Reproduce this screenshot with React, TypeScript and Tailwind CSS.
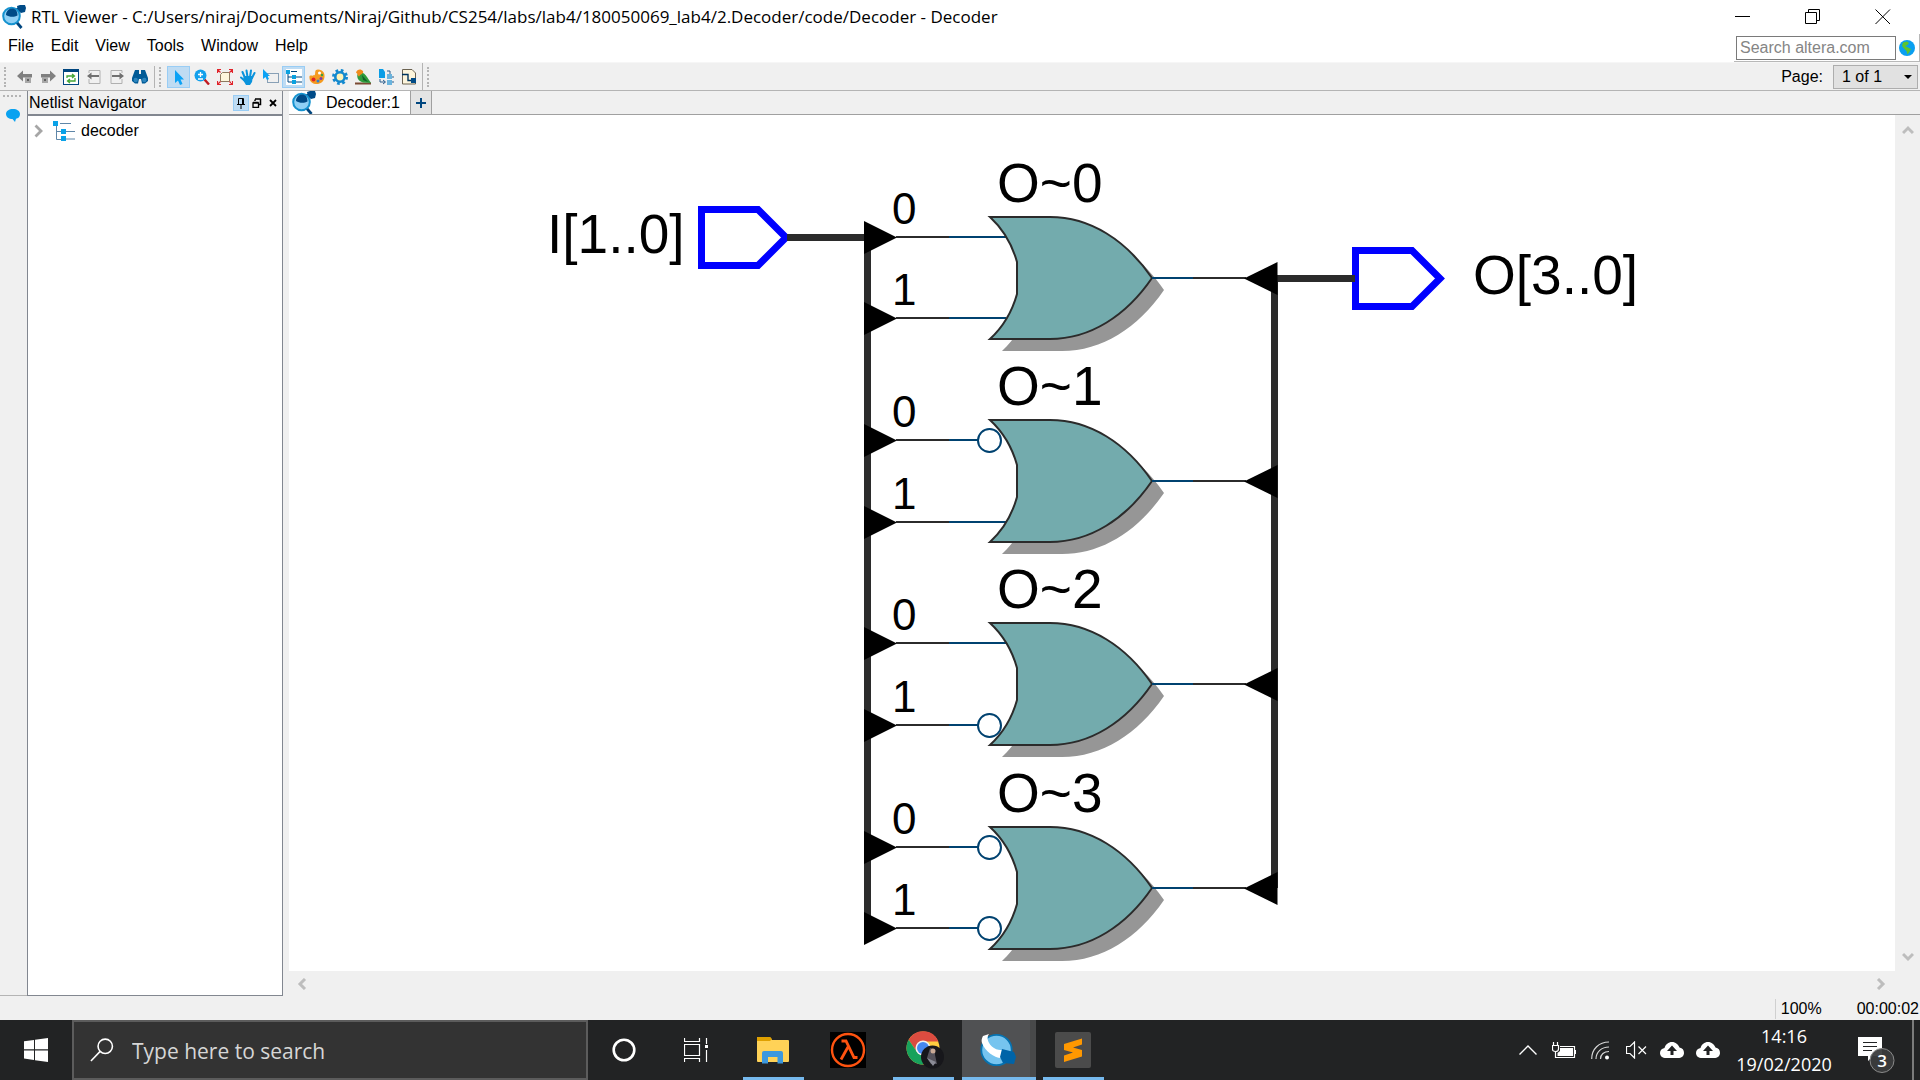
import type { ReactNode } from "react";

const UI = "font-['Liberation_Sans',Arial,sans-serif]";
const SEGOE = "font-['Open_Sans','Noto_Sans',sans-serif]";

function Icon({ children, className = "size-4" }: { children: ReactNode; className?: string }) {
  return (
    <svg viewBox="0 0 16 16" className={`shrink-0 ${className}`} fill="none" aria-hidden="true">
      {children}
    </svg>
  );
}

function AppLogo() {
  return (
    <svg viewBox="0 0 24 24" className="size-6 shrink-0" fill="none" aria-hidden="true">
      <path d="M15 1 L18 0 H23 L24 3 L23 7 L19 8 L16 6 Z" fill="#004b87" />
      <path d="M12 5 L19 3" stroke="#004b87" strokeWidth="2" />
      <path d="M14 16.500 L19.500 23" stroke="#00467f" strokeWidth="2.800" />
      <circle cx="9.500" cy="11" r="8.300" fill="#8fd0f5" stroke="#1592cf" strokeWidth="2" />
      <path d="M4 10 C4 6 7 3.500 10 3.500 C13.500 3.500 15.500 6 15.500 10.500 C12 12.500 7 12 4 10 Z" fill="#004b87" />
    </svg>
  );
}

const historyTools = [
  {
    name: "Back",
    icon: (
      <>
        <path d="M0 7 L6 1.500 V5 H15 V8.500 H6 V12.500 Z" fill="#808080" />
        <rect x="8" y="8" width="6" height="6" fill="#a8a8a8" />
        <rect x="10" y="10" width="2" height="2" fill="#606060" />
      </>
    ),
  },
  {
    name: "Forward",
    icon: (
      <>
        <path d="M16 7 L10 1.500 V5 H1 V8.500 H10 V12.500 Z" fill="#808080" />
        <rect x="2" y="8" width="6" height="6" fill="#a8a8a8" />
        <rect x="4" y="10" width="2" height="2" fill="#606060" />
      </>
    ),
  },
  {
    name: "Refresh",
    icon: (
      <>
        <rect x="0.500" y="0.500" width="15" height="15" fill="#fff" stroke="#00467f" />
        <rect width="16" height="3" fill="#00467f" />
        <path d="M4 9 V7 H11 M9 5 L11.500 7 L9 9 M12 9 V12 H5 M7 10 L4.500 12 L7 14" stroke="#43a535" strokeWidth="1.300" />
      </>
    ),
  },
  {
    name: "Previous page",
    icon: (
      <>
        <path d="M3 4 V1.500 H14 V14.500 H3 V10" stroke="#b0b0b0" />
        <path d="M1 7 L5.500 3.500 V6 H13 V8 H5.500 V10.500 Z" fill="#707070" />
      </>
    ),
  },
  {
    name: "Next page",
    icon: (
      <>
        <path d="M13 4 V1.500 H2 V14.500 H13 V10" stroke="#b0b0b0" />
        <path d="M15 7 L10.500 3.500 V6 H3 V8 H10.500 V10.500 Z" fill="#707070" />
      </>
    ),
  },
  {
    name: "Find",
    icon: (
      <>
        <path d="M3 1 H7 V5 H9 V1 H13 L16 9 V12 L13 14.500 H10 L9 10 H7 L6 14.500 H3 L0 12 V9 Z" fill="#005a96" />
        <circle cx="3.700" cy="11" r="2.200" fill="#2b85be" />
        <circle cx="12.300" cy="11" r="2.200" fill="#2b85be" />
      </>
    ),
  },
];

const viewTools = [
  {
    name: "Select",
    active: true,
    icon: <path d="M4 1 V14 L7 11.500 L9 16 L11.500 15 L9.500 10.500 H13 Z" fill="#0aa2f5" />,
  },
  {
    name: "Zoom",
    icon: (
      <>
        <path d="M10.500 10.500 L15 15.500" stroke="#c11a20" strokeWidth="2.400" />
        <circle cx="6.500" cy="6.500" r="6" fill="#12a0ec" />
        <path d="M4 5.500 H9 M6.500 3 V8 M4 10 H9" stroke="#fff" strokeWidth="1.300" />
      </>
    ),
  },
  {
    name: "Fit in window",
    icon: (
      <>
        <path d="M5.500 3.500 H12.500 V12.500 H3.500 V5.500 Z" fill="#fdf5dc" stroke="#8c7a60" />
        <path d="M0.500 4 V0.500 H4 M12 0.500 H15.500 V4 M15.500 12 V15.500 H12 M4 15.500 H0.500 V12 M0.500 0.500 L3.500 3.500 M15.500 0.500 L12.500 3.500 M15.500 15.500 L12.500 12.500 M0.500 15.500 L3.500 12.500" stroke="#e0242b" strokeWidth="1.200" />
      </>
    ),
  },
  {
    name: "Hand",
    icon: (
      <>
        <path d="M5 9 L2.500 3 M7.500 8 L6.500 1.500 M10 8 L11 1.500 M12 9 L14.500 4 M5 12 L1 8.500" stroke="#0a93dc" strokeWidth="2" strokeLinecap="round" />
        <path d="M4 7 H13 L12 13 L10 16 H6 L3 11 Z" fill="#0a93dc" />
      </>
    ),
  },
  {
    name: "Area selection",
    icon: (
      <>
        <rect x="4.500" y="4.500" width="11" height="9" stroke="#20507c" strokeDasharray="1 1" />
        <path d="M0 0 V10 L2.500 8 L4 11 L6 10 L4.500 7 H7 Z" fill="#0aa2f5" />
      </>
    ),
  },
  {
    name: "Netlist navigator",
    active: true,
    icon: (
      <>
        <rect width="16" height="16" fill="#fff" />
        <path d="M2 3 V13 H7 M2 8 H7 M5 2.500 H11 M9 8 H16 M9 13 H16" stroke="#00467f" />
        <path d="M0 1 H4 V5 H0 Z M6 6 H10 V10 H6 Z M6 11 H10 V15 H6 Z" fill="#0aa2e0" />
      </>
    ),
  },
  {
    name: "Color settings",
    icon: (
      <>
        <path d="M9 0.500 C14 0.500 16 4.500 15.500 8 C15 13 11 15.500 6.500 15 C2 14.500 0 11 0.500 7 C2 6 5 7.500 6 5.500 C6.500 3.500 5.500 0.500 9 0.500 Z" fill="#f59b20" />
        <circle cx="10.500" cy="4" r="1.500" fill="#fff" />
        <circle cx="4.500" cy="10.500" r="2" fill="#e02424" />
        <circle cx="9" cy="12" r="1.500" fill="#2c7fd0" />
        <circle cx="12" cy="9.500" r="1.500" fill="#7a3ea8" />
        <circle cx="13" cy="6" r="1.200" fill="#37a043" />
      </>
    ),
  },
  {
    name: "Settings",
    icon: (
      <>
        <circle cx="8" cy="8" r="6.500" stroke="#1389cf" strokeWidth="3" strokeDasharray="2.600 2.500" />
        <circle cx="8" cy="8" r="4.700" fill="#fff3b8" stroke="#1389cf" strokeWidth="2.600" />
      </>
    ),
  },
  {
    name: "Bird's eye view",
    icon: (
      <>
        <path d="M0 13.500 H16 V15.500 H0 Z" fill="#7a4a33" />
        <path d="M3 4 C7 2 10 5 12 8 L16 14 L8 13.500 C3 12 1 8 3 4 Z" fill="#2e9b3c" />
        <path d="M1 3.500 C2 0 6 -0.500 8 2 C9 5 5 5 4.500 7 C4 8 3 7 2.500 5 Z" fill="#f08a1c" />
        <path d="M7 6 L13 13 L8 11 Z" fill="#12602a" />
      </>
    ),
  },
  {
    name: "Bring to page",
    icon: (
      <>
        <path d="M1 0 H5 L7 3 V9 H1 Z" fill="#0a9de6" />
        <path d="M9 5 H14 V10 H9 Z M9 11 H14 V16 H9 Z" fill="#6ab4de" />
        <path d="M9 2 H12 V5 M2 10 V13 H7 M5 11 L7.500 13 L5 15 M15 7 V9 M15 12 V14" stroke="#2a5c8c" />
      </>
    ),
  },
  {
    name: "Export diagram",
    icon: (
      <>
        <path d="M1.500 0.500 H11 L14.500 4 V15 H1.500 Z" fill="#fdf5dc" stroke="#6b6250" />
        <path d="M1 5.500 H7 V11.500 H11" stroke="#00345e" strokeWidth="1.400" />
        <rect x="10" y="9" width="5" height="5" fill="#004b87" />
      </>
    ),
  },
];

function Grip() {
  return <div className="h-5 w-1 border-l-2 border-dotted border-[#b4b4b4]" />;
}

function ToolButton({ name, icon, active }: { name: string; icon: ReactNode; active?: boolean }) {
  return (
    <button
      aria-label={name}
      className={`flex h-[22px] w-[23px] items-center justify-center border ${active ? "border-[#99cdf5] bg-[#bfdcf3]" : "border-transparent"}`}
    >
      <Icon>{icon}</Icon>
    </button>
  );
}

function TitleBar() {
  return (
    <header className={`flex h-[34px] items-center bg-white pl-0.5 text-black ${SEGOE}`}>
      <AppLogo />
      <h1 className="ml-[5px] flex-1 truncate text-[17px] leading-6">
        RTL Viewer - C:/Users/niraj/Documents/Niraj/Github/CS254/labs/lab4/180050069_lab4/2.Decoder/code/Decoder - Decoder
      </h1>
      <div className="mr-0.5 flex h-full">
        <button aria-label="Minimize" className="flex w-[70px] items-center justify-center">
          <Icon><path d="M0 7.500 H15" stroke="#000" /></Icon>
        </button>
        <button aria-label="Restore" className="flex w-[70px] items-center justify-center">
          <Icon><path d="M0.500 3.500 H11.500 V14.500 H0.500 Z M3.500 3.500 V0.500 H14.500 V11.500 H11.500" stroke="#000" /></Icon>
        </button>
        <button aria-label="Close" className="flex w-[70px] items-center justify-center">
          <Icon><path d="M0.500 0.500 L15 15 M15 0.500 L0.500 15" stroke="#000" /></Icon>
        </button>
      </div>
    </header>
  );
}

function MenuBar() {
  return (
    <div className="flex h-7 items-start justify-between bg-white">
      <nav className="flex gap-[17px] pl-2">
        {["File", "Edit", "View", "Tools", "Window", "Help"].map((item) => (
          <button key={item} className="text-base leading-6">{item}</button>
        ))}
      </nav>
      <div className="flex h-7 items-center gap-[3px] border-r border-b border-[#b8b8b8] pr-1 pl-0.5">
        <input
          aria-label="Search altera.com"
          placeholder="Search altera.com"
          className="h-6 w-40 border border-[#7a7a7a] bg-white px-[3px] text-base leading-5 placeholder:text-[#858585]"
        />
        <button aria-label="Search the web">
          <Icon>
            <circle cx="8" cy="8" r="8" fill="#0a9ff0" />
            <path d="M4 2.500 L8 1.500 L10 3 L8.500 5 L6 6 L9 7.500 L12 9 L10.500 12 L8.500 14.500 L7.500 11 L5 8.500 L3 6 Z" fill="#5fc42c" />
          </Icon>
        </button>
      </div>
    </div>
  );
}

function Toolbar() {
  return (
    <div className="flex h-[29px] items-center border-t border-b border-t-[#f6f6f6] border-b-[#b4b4b4] bg-[#f0f0f0]">
      <div className="flex items-center pl-1">
        <Grip />
        <div className="flex pl-[5px]">{historyTools.map((t) => <ToolButton key={t.name} {...t} />)}</div>
      </div>
      <div className="ml-[3px] flex items-center gap-1 border-l border-[#b4b4b4] pl-1">
        <Grip />
        <div className="flex">{viewTools.map((t) => <ToolButton key={t.name} {...t} />)}</div>
      </div>
      <div className="ml-0.5 flex h-full items-center border-l border-[#b4b4b4] pl-1"><Grip /></div>
      <div className="ml-auto flex items-center gap-2.5 pr-0.5">
        <label htmlFor="page" className="text-base">Page:</label>
        <div className="relative">
          <select id="page" className="block h-6 w-[85px] appearance-none border border-[#adadad] bg-[#e1e1e1] pl-2 text-base leading-5">
            <option>1 of 1</option>
          </select>
          <svg viewBox="0 0 8 4" className="pointer-events-none absolute top-2.5 right-1.5 h-1 w-2"><path d="M0 0 H8 L4 4 Z" fill="#000" /></svg>
        </div>
      </div>
    </div>
  );
}

function NetlistNavigator() {
  return (
    <aside className="flex w-[256px] shrink-0 flex-col border border-t-0 border-[#828790] bg-white">
      <div className="flex h-[25px] items-center border-b-2 border-[#828790] bg-[#f0f0f0] pr-px pl-px">
        <h2 className="flex-1 text-base leading-6">Netlist Navigator</h2>
        <button aria-label="Pin" className="flex size-4 items-center justify-center border border-[#99cdf5] bg-[#bfdcf3]">
          <svg viewBox="0 0 10 12" className="h-3 w-2.5" fill="none"><path d="M2.500 1.500 H7.500 V7 M2.500 1.500 V7 M1 7.500 H9 M6.500 2 V7 M5 8 V12" stroke="#000" /></svg>
        </button>
        <button aria-label="Float" className="flex size-4 items-center justify-center">
          <svg viewBox="0 0 10 10" className="size-2.5" fill="none"><path d="M3 1 H9 M3 1.500 V3 M8.500 1 V6.500 H7" stroke="#000" strokeWidth="1.500" /><path d="M1 5 H6.500 V9.500 H1 Z M1 4.500 H6.500" stroke="#000" strokeWidth="1.300" /></svg>
        </button>
        <button aria-label="Close panel" className="flex size-4 items-center justify-center">
          <svg viewBox="0 0 8 8" className="size-2"><path d="M1 1 L7 7 M7 1 L1 7" stroke="#000" strokeWidth="1.800" /></svg>
        </button>
      </div>
      <div className="flex h-[30px] items-center pl-1">
        <button aria-label="Expand decoder" className="flex w-3 justify-center">
          <svg viewBox="0 0 9 14" className="h-3.5 w-[9px]" fill="none"><path d="M1.500 1.500 L7 7 L1.500 12.500" stroke="#a6a6a6" strokeWidth="2.800" /></svg>
        </button>
        <svg viewBox="0 0 22 20" className="ml-[9px] h-5 w-[22px]" fill="none">
          <path d="M3.500 4 V18.500 H9 M3.500 10.500 H9 M7 2.500 H18 M13 10.500 H22 M13 18 H22" stroke="#5f86a8" />
          <path d="M0 0 H5 V5 H0 Z M8 8 H13 V13 H8 Z M8 15 H13 V20 H8 Z" fill="#0aa2e8" />
        </svg>
        <span className="ml-1.5 text-base leading-6">decoder</span>
      </div>
    </aside>
  );
}

const gates = [
  { name: "O~0", y: 237, pinGap: 81, inverted: [false, false] },
  { name: "O~1", y: 440, pinGap: 82, inverted: [true, false] },
  { name: "O~2", y: 643, pinGap: 82, inverted: [false, true] },
  { name: "O~3", y: 847, pinGap: 81, inverted: [true, true] },
];

const GATE = "M990 -20 H1050 C1090 -20 1126 3 1152 41 C1126 79 1090 102 1050 102 H990 C1003 90 1012 75 1017 57 V25 C1012 7 1003 -8 990 -20 Z";

function Gate({ name, y, pinGap, inverted }: { name: string; y: number; pinGap: number; inverted: boolean[] }) {
  return (
    <g transform={`translate(0 ${y})`}>
      {inverted.map((inv, i) => (
        <g key={i} transform={`translate(0 ${i * pinGap})`}>
          <path d="M864 -16 L897 0.500 L864 17 Z" fill="#000" />
          <path d="M896 0 H949" stroke="#2b2b2b" strokeWidth="2" />
          <path d={inv ? "M949 0 H978" : "M949 0 H1006"} stroke="#004270" strokeWidth="2" />
          <text x="892" y="-13" fontSize="44">{i}</text>
        </g>
      ))}
      <path d={GATE} fill="#969696" transform="translate(12 12)" />
      <path d={GATE} fill="#73abad" stroke="#2b2b2b" strokeWidth="2" />
      {inverted.map((inv, i) => inv && <circle key={i} cx="989.500" cy={i * pinGap + 0.5} r="11.500" fill="#fff" stroke="#004270" strokeWidth="2" />)}
      <path d="M1152 41 H1193" stroke="#004270" strokeWidth="2" />
      <path d="M1193 41 H1246" stroke="#2b2b2b" strokeWidth="2" />
      <path d="M1277.500 25 V58 L1244 41.500 Z" fill="#000" />
      <text x="997" y="-35" fontSize="55">{name}</text>
    </g>
  );
}

function Schematic() {
  return (
    <svg
      viewBox="289 115 1606 856"
      preserveAspectRatio="xMinYMin meet"
      className="min-h-0 min-w-0 flex-1 bg-white"
      fill="none"
      role="img"
      aria-label="Decoder schematic"
    >
      <g fill="#000" fontFamily="'Liberation Sans', Arial, sans-serif">
        <path d="M867.500 237 V928 M787 237.500 H866" stroke="#2b2b2b" strokeWidth="7" fill="none" />
        <path d="M1274.500 278 V888 M1276 278.500 H1355" stroke="#2b2b2b" strokeWidth="7" fill="none" />
        <path d="M701.500 209.500 H758 L786 237.500 L758 265.500 H701.500 Z" stroke="#00f" strokeWidth="7" fill="none" />
        <path d="M1355.500 250.500 H1412 L1440 278.500 L1412 306.500 H1355.500 Z" stroke="#00f" strokeWidth="7" fill="none" />
        <path d="M787 237.500 H800 M1345 278.500 H1355" stroke="#2b2b2b" strokeWidth="7" />
        <text x="547" y="253" fontSize="55">I[1..0]</text>
        <text x="1473" y="294" fontSize="55">O[3..0]</text>
        {gates.map((g) => <Gate key={g.name} {...g} />)}
      </g>
    </svg>
  );
}

function ScrollChevron({ label, d }: { label: string; d: string }) {
  return (
    <button aria-label={label} className="flex size-[25px] items-center justify-center">
      <svg viewBox="0 0 12 12" className="size-3" fill="none"><path d={d} stroke="#bdbdbd" strokeWidth="3" /></svg>
    </button>
  );
}

function Workspace() {
  return (
    <main className="ml-1.5 flex min-w-0 flex-1 flex-col">
      <div className="flex h-6 shrink-0 border-b border-[#a0a0a0]">
        <button className="flex w-[121px] items-center overflow-hidden bg-white pl-[3px] text-base leading-6">
          <AppLogo />
          <span className="ml-2.5">Decoder:1</span>
        </button>
        <button aria-label="New tab" className="flex w-[22px] items-center justify-center border-x border-[#a0a0a0] bg-[#e4e4e4]">
          <svg viewBox="0 0 10 10" className="size-2.5"><path d="M5 0 V10 M0 5 H10" stroke="#00467f" strokeWidth="2" /></svg>
        </button>
      </div>
      <div className="flex min-h-0 flex-1">
        <Schematic />
        <div className="flex w-[25px] flex-col justify-between py-0.5">
          <ScrollChevron label="Scroll up" d="M1 9 L6 4 L11 9" />
          <ScrollChevron label="Scroll down" d="M1 3 L6 8 L11 3" />
        </div>
      </div>
      <div className="mr-[27px] flex h-[25px] items-center justify-between">
        <ScrollChevron label="Scroll left" d="M9 1 L4 6 L9 11" />
        <ScrollChevron label="Scroll right" d="M3 1 L8 6 L3 11" />
      </div>
    </main>
  );
}

const UploadCloud = () => (
  <svg viewBox="0 0 24 16" className="h-4 w-6" fill="none" aria-hidden="true">
    <path d="M6 16 C2.500 16 0 14 0 11 C0 8.500 1.500 6.500 4.500 6 C5.500 2.500 8.500 0 12 0 C15.500 0 18.500 2.500 19.500 5.500 C22.500 6 24 8 24 11 C24 14 21.500 16 18 16 Z" fill="#fff" />
    <path d="M12 3.500 L17 9 H13.500 V13 H10.500 V9 H7 Z" fill="#222324" />
  </svg>
);

const apps = [
  {
    name: "File Explorer",
    running: true,
    icon: (
      <svg viewBox="0 0 32 28" className="h-7 w-8">
        <path d="M0 2 Q0 1 1 1 H13 L15 4 H31 Q32 4 32 5 V25 Q32 26 31 26 H1 Q0 26 0 25 Z" fill="#ffd257" />
        <path d="M0 2 Q0 1 1 1 H13 L15 3 L13 5 H0 Z" fill="#dfa000" />
        <path d="M5 27.500 V17 Q5 15 7 15 H24 Q26 15 26 17 V27.500 H20.500 V21 H11 V27.500 Z" fill="#3c98de" />
      </svg>
    ),
  },
  {
    name: "Half-Life",
    icon: (
      <svg viewBox="0 0 36 36" className="size-9" fill="none">
        <rect width="36" height="36" fill="#000" />
        <circle cx="18" cy="18" r="16" stroke="#ff5310" strokeWidth="2.400" />
        <path d="M11.500 9 H16 L24 25.500 H27.500 M18 15 L11 27.500" stroke="#ff5310" strokeWidth="2.800" />
      </svg>
    ),
  },
  {
    name: "Google Chrome",
    running: true,
    icon: (
      <svg viewBox="0 0 38 38" className="ml-1 size-[38px]">
        <circle cx="17" cy="17" r="16.500" fill="#ffcd40" />
        <path d="M2.700 8.800 A16.500 16.500 0 0 1 32.500 10.500 L17 10.500 L11 21 Z" fill="#dc4c40" />
        <path d="M2.700 8.800 A16.500 16.500 0 0 0 17 33.500 L22 23 L11 21 Z" fill="#17a25c" />
        <circle cx="17" cy="17" r="7.500" fill="#f2f2f2" />
        <circle cx="17" cy="17" r="6" fill="#4688f1" />
        <circle cx="26.500" cy="26" r="11.500" fill="#17171b" />
        <path d="M24 17 Q30 17 29 24 L31 33 H25 L21 27 Z" fill="#55525b" />
        <circle cx="27" cy="20" r="2.500" fill="#c9a995" />
        <path d="M21 27 L30 31 L27 35 Z" fill="#8b8c96" />
      </svg>
    ),
  },
  {
    name: "Quartus",
    running: true,
    active: true,
    icon: (
      <svg viewBox="0 0 36 34" className="h-[34px] w-9">
        <circle cx="16.500" cy="17" r="15.200" fill="#76c4ef" stroke="#0672b0" strokeWidth="1.800" />
        <path d="M3 3 L9 1 C6 5 8 11 14 15 C17 17 20 17 22 17 L21 25 C14 25 5 18 2 10 C1 7 2 5 3 3 Z" fill="#fff" />
        <path d="M22 16 L34 19 L36 24 L34 31 L23 30 L20 24 Z" fill="#0064a8" />
      </svg>
    ),
  },
  {
    name: "Sublime Text",
    running: true,
    icon: (
      <svg viewBox="0 0 36 36" className="size-9">
        <rect width="36" height="36" rx="2" fill="#4b4b4b" />
        <path d="M9 12 L27 6.500 V12.500 L18 15.500 L27 18 V24.500 L9 30 V23.500 L18 20.500 L9 18 Z" fill="#ff9800" />
      </svg>
    ),
  },
];

function Taskbar() {
  return (
    <footer className={`flex h-[60px] shrink-0 bg-[#222324] text-white ${SEGOE}`}>
      <button aria-label="Start" className="flex w-[72px] items-center justify-center">
        <svg viewBox="0 0 24 24" className="size-6"><path d="M0 3.300 L10 2 V11.300 H0 Z M11 1.800 L24 0 V11.300 H11 Z M0 12.500 H10 V22 L0 20.600 Z M11 12.500 H24 V24 L11 22.200 Z" fill="#fff" /></svg>
      </button>
      <label className="flex w-[516px] items-center border-2 border-[#5c5c5c] bg-[#333]">
        <svg viewBox="0 0 26 26" className="ml-4 size-6" fill="none"><circle cx="16.500" cy="9" r="7.800" stroke="#fff" strokeWidth="1.700" /><path d="M11 14.500 L1 25" stroke="#fff" strokeWidth="1.700" /></svg>
        <input aria-label="Type here to search" placeholder="Type here to search" className="ml-[18px] min-w-0 flex-1 bg-transparent pt-1 text-[21px] placeholder:text-[#d6d6d6]" />
      </label>
      <button aria-label="Cortana" className="flex w-[72px] items-center justify-center">
        <svg viewBox="0 0 24 24" className="size-6" fill="none"><circle cx="12" cy="12" r="10.300" stroke="#fff" strokeWidth="2.600" /></svg>
      </button>
      <button aria-label="Task view" className="flex w-[72px] items-center justify-center">
        <svg viewBox="0 0 24 24" className="size-6" fill="none"><path d="M0.500 0 V3.500 H15.500 V0 M0.500 6.500 H15.500 V17.500 H0.500 Z M0.500 24 V20.500 H15.500 V24 M22.500 0 V6 M22.500 12 V24" stroke="#fff" strokeWidth="1.200" /><rect x="21" y="7" width="3" height="3" fill="#fff" /></svg>
      </button>
      <div className="ml-1 flex">
        {apps.map((app) => (
          <button key={app.name} aria-label={app.name} className={`flex w-[75px] flex-col items-center ${app.active ? "border-l border-[#222324] bg-[#505153]" : ""}`}>
            <span className={`flex h-[57px] w-full items-center justify-center pt-[3px] ${app.active ? "border-r-[6px] border-[#48494a] pl-1" : "pr-0.5"}`}>{app.icon}</span>
            {app.running && <span className={`h-[3px] bg-[#76b9ed] ${app.active ? "w-full" : "w-[61px]"}`} />}
          </button>
        ))}
      </div>
      <div className="ml-auto flex items-center">
        <button aria-label="Show hidden icons" className="flex w-9 justify-center">
          <svg viewBox="0 0 18 10" className="h-2.5 w-[18px]" fill="none"><path d="M0.500 9.500 L9 1 L17.500 9.500" stroke="#fff" strokeWidth="1.400" /></svg>
        </button>
        <button aria-label="Battery" className="flex w-9 justify-center">
          <svg viewBox="0 0 24 17" className="h-[17px] w-6" fill="none"><path d="M1.500 0 V3 M5.500 0 V3 M0.500 3.500 H6.500 V7 Q6.500 9.500 3.500 9.500 Q0.500 9.500 0.500 7 Z M3.500 9.500 V15.500 H22.500 V4.500 H8 M23.500 8 V12" stroke="#fff" strokeWidth="1.200" /><path d="M8 6 H21 V14 H5.500 V11 L8 9 Z" fill="#fff" /></svg>
        </button>
        <button aria-label="Wi-Fi" className="flex w-9 justify-center">
          <svg viewBox="0 0 18 19" className="h-[19px] w-[18px]" fill="none"><path d="M0.700 18 C0.700 8 8 1 18 1 M5 18 C5 11 10.500 6 18 6 M9.500 18 C9.500 13.500 13 10.500 18 10.500" stroke="#d8d8d8" strokeWidth="1.200" /><circle cx="16" cy="16.500" r="2" fill="#fff" /></svg>
        </button>
        <button aria-label="Muted" className="flex w-9 justify-center">
          <svg viewBox="0 0 21 18" className="h-[18px] w-[21px]" fill="none"><path d="M0.500 5.500 H4 L8.500 1 V17 L4 12.500 H0.500 Z M12.500 5.500 L20 13 M20 5.500 L12.500 13" stroke="#fff" strokeWidth="1.200" /></svg>
        </button>
        <button aria-label="Backup and sync" className="flex w-9 justify-center"><UploadCloud /></button>
        <button aria-label="Cloud upload" className="flex w-9 justify-center"><UploadCloud /></button>
        <button className="ml-2 flex w-[100px] flex-col items-center text-lg leading-7">
          <time>14:16</time>
          <time>19/02/2020</time>
        </button>
        <button aria-label="3 notifications" className="mr-1.5 flex w-[72px] justify-center pt-2.5">
          <svg viewBox="0 0 37 37" className="ml-3 size-[37px]" fill="none">
            <path d="M0 0 H24 V19 H15 L10 24 V19 H0 Z" fill="#fff" />
            <path d="M5 5.500 H19 M5 9.500 H19 M5 13.500 H14" stroke="#222324" strokeWidth="1.200" />
            <circle cx="24" cy="23.500" r="12" fill="#3b3c3d" fillOpacity="0.950" stroke="#8a8a8a" />
            <text x="24" y="30" textAnchor="middle" fontSize="17" fontWeight="600" fill="#fff">3</text>
          </svg>
        </button>
      </div>
      <button aria-label="Show desktop" className="w-2 border-l-2 border-[#7b7b7b]" />
    </footer>
  );
}

export default function App() {
  return (
    <div className={`flex h-screen flex-col overflow-hidden bg-[#f0f0f0] text-black ${UI}`}>
      <TitleBar />
      <MenuBar />
      <Toolbar />
      <div className="flex min-h-0 flex-1">
        <div className="flex w-[27px] shrink-0 flex-col items-center border-b border-[#b4b4b4] pt-1">
          <div className="mr-1 w-[18px] border-t-2 border-dotted border-[#b4b4b4]" />
          <button aria-label="Messages" className="mt-3 mr-0.5">
            <svg viewBox="0 0 14 13" className="h-[13px] w-3.5"><path d="M7 0 C11 0 14 2 14 5 C14 8 12 9.500 10 9.700 L9 13 L6.500 10 C3 10 0 8 0 5 C0 2 3 0 7 0 Z" fill="#0aa2f0" /></svg>
          </button>
        </div>
        <NetlistNavigator />
        <Workspace />
      </div>
      <div className="flex h-6 shrink-0 items-center justify-end pt-px pr-px text-base">
        <span className="border-l border-[#d0d0d0] pr-[35px] pl-[5px] leading-5">100%</span>
        <span>00:00:02</span>
      </div>
      <Taskbar />
    </div>
  );
}
